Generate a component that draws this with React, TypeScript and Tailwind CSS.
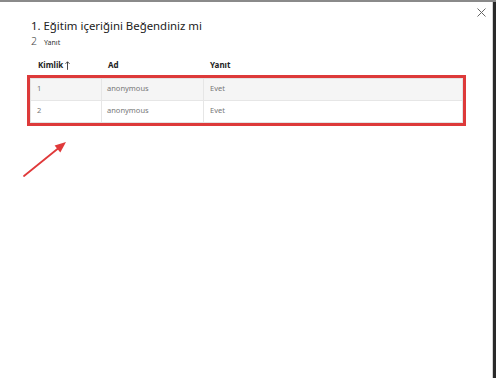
import React from "react";

const font = { fontFamily: '"Noto Sans", "Open Sans", sans-serif' };

export default function App() {
  const rows = [
    { id: "1", ad: "anonymous", yanit: "Evet", bg: "bg-[#f5f5f5]", h: "h-[22px] border-b border-[#e6e6e6]" },
    { id: "2", ad: "anonymous", yanit: "Evet", bg: "bg-white", h: "h-[21px]" },
  ];
  return (
    <div className="w-[496px] h-[378px] bg-white border-t-2 border-t-[#8a8a8a] flex overflow-hidden" style={font}>
      <div className="flex-1 relative flex flex-col border-r border-r-[#d4d4d4]">
        <button className="absolute right-[6px] top-[6px]">
          <svg width="9" height="9" viewBox="0 0 9 9" fill="none" stroke="#666" strokeWidth="1">
            <path d="M0.5 0.5 L8.5 8.5 M8.5 0.5 L0.5 8.5" />
          </svg>
        </button>
        <div className="pl-[31px] pt-[17px]">
          <div className="text-[11.4px] leading-[14px] text-[#222]">1. Eğitim içeriğini Beğendiniz mi</div>
          <div className="flex items-baseline gap-[7px] mt-[1.5px] h-[12px]">
            <span className="text-[10.5px] leading-[12px] text-[#444] font-light">2</span>
            <span className="text-[7px] leading-[12px] text-[#333]">Yanıt</span>
          </div>
        </div>
        <div className="pl-[27px] pr-[26px] mt-[9px]">
          <div className="flex h-[19px] items-center text-[8px] font-bold text-[#222] pl-[11px]">
            <div className="w-[70px] flex items-center gap-[2px]">
              Kimlik
              <svg width="5" height="9" viewBox="0 0 5 9" fill="none" stroke="#333" strokeWidth="0.9">
                <path d="M2.5 8.8 V0.8 M0.5 2.8 L2.5 0.8 L4.5 2.8" />
              </svg>
            </div>
            <div className="w-[102px]">Ad</div>
            <div>Yanıt</div>
          </div>
          <div className="border-[3px] border-[#dd3a3a]">
            <div className="border border-[#e3e3e3]">
              {rows.map((r) => (
                <div key={r.id} className={`flex items-center text-[7.5px] text-[#777] ${r.bg} ${r.h}`}>
                  <div className="w-[71px] h-full flex items-center pl-[6px] border-r border-[#e6e6e6]">{r.id}</div>
                  <div className="w-[102px] h-full flex items-center pl-[5px] border-r border-[#e6e6e6]">{r.ad}</div>
                  <div className="flex-1 h-full flex items-center pl-[6px]">{r.yanit}</div>
                </div>
              ))}
            </div>
          </div>
        </div>
        <svg className="ml-[20px] mt-[12px]" width="50" height="42" viewBox="0 0 50 42">
          <path d="M4 38 L38 10.5" stroke="#e0393a" strokeWidth="1.8" strokeLinecap="round" />
          <path d="M46 4 L40.3 14.4 L34.6 7.4 Z" fill="#e0393a" />
        </svg>
      </div>
      <div className="w-[3px] bg-[#2a2a2a]" />
    </div>
  );
}
